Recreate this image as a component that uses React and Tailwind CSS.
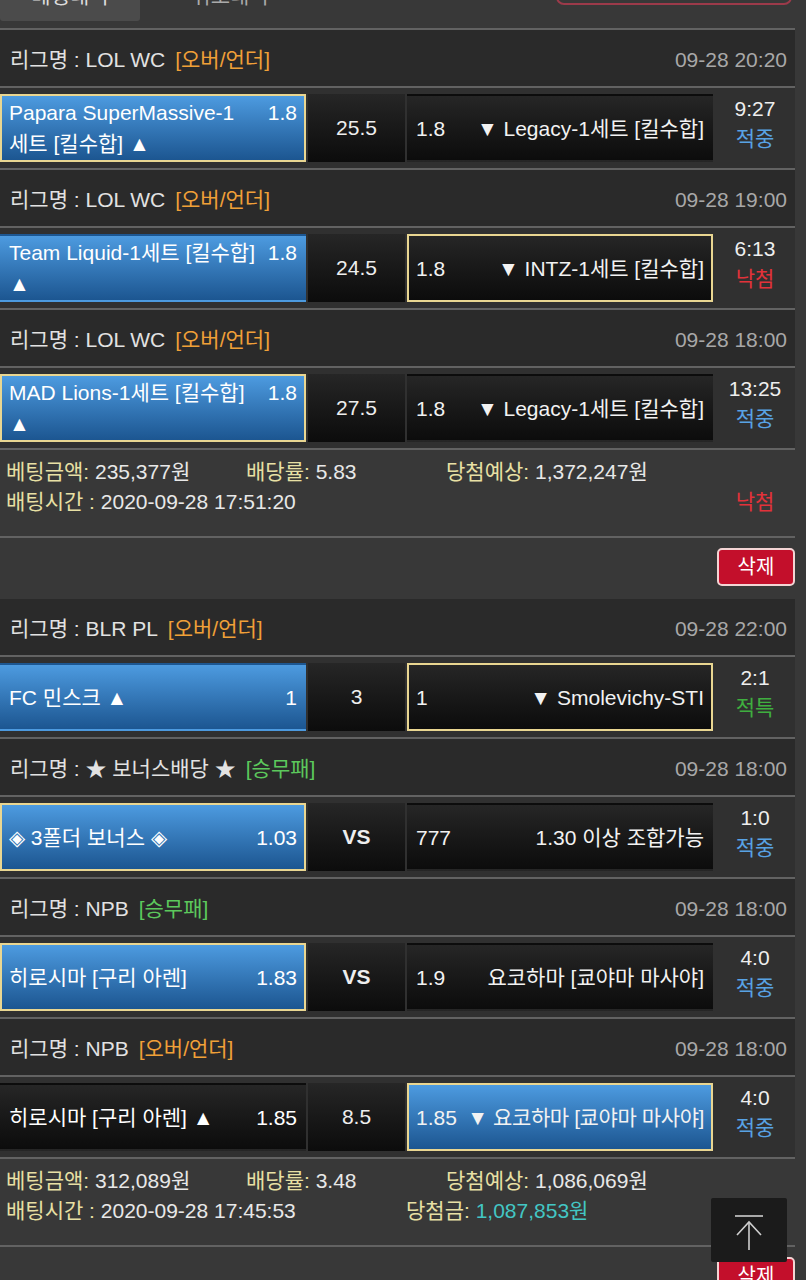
import React from 'react'

const RESULT_COLOR = {
  '적중': 'text-[#58a2e4]',
  '낙첨': 'text-[#e2323a]',
  '적특': 'text-[#3fae3f]',
}

const groups = [
  {
    matches: [
      {
        league: 'LOL WC', type: '[오버/언더]', typeColor: 'text-[#f0a038]', time: '09-28 20:20',
        home: { name: 'Papara SuperMassive-1 세트 [킬수합] ▲', odds: '1.8', blue: true, sel: true },
        mid: '25.5',
        away: { name: '▼ Legacy-1세트 [킬수합]', odds: '1.8' },
        score: '9:27', result: '적중',
      },
      {
        league: 'LOL WC', type: '[오버/언더]', typeColor: 'text-[#f0a038]', time: '09-28 19:00',
        home: { name: 'Team Liquid-1세트 [킬수합] ▲', odds: '1.8', blue: true },
        mid: '24.5',
        away: { name: '▼ INTZ-1세트 [킬수합]', odds: '1.8', sel: true },
        score: '6:13', result: '낙첨',
      },
      {
        league: 'LOL WC', type: '[오버/언더]', typeColor: 'text-[#f0a038]', time: '09-28 18:00',
        home: { name: 'MAD Lions-1세트 [킬수합] ▲', odds: '1.8', blue: true, sel: true },
        mid: '27.5',
        away: { name: '▼ Legacy-1세트 [킬수합]', odds: '1.8' },
        score: '13:25', result: '적중',
      },
    ],
    summary: {
      amount: '235,377원', rate: '5.83', expect: '1,372,247원', time: '2020-09-28 17:51:20',
      lost: true,
    },
  },
  {
    matches: [
      {
        league: 'BLR PL', type: '[오버/언더]', typeColor: 'text-[#f0a038]', time: '09-28 22:00',
        home: { name: 'FC 민스크 ▲', odds: '1', blue: true },
        mid: '3',
        away: { name: '▼ Smolevichy-STI', odds: '1', sel: true },
        score: '2:1', result: '적특',
      },
      {
        league: '★ 보너스배당 ★', type: '[승무패]', typeColor: 'text-[#5cc85c]', time: '09-28 18:00',
        home: { name: '◈ 3폴더 보너스 ◈', odds: '1.03', blue: true, sel: true },
        mid: 'VS',
        away: { name: '1.30 이상 조합가능', odds: '777' },
        score: '1:0', result: '적중',
      },
      {
        league: 'NPB', type: '[승무패]', typeColor: 'text-[#5cc85c]', time: '09-28 18:00',
        home: { name: '히로시마 [구리 아렌]', odds: '1.83', blue: true, sel: true },
        mid: 'VS',
        away: { name: '요코하마 [쿄야마 마사야]', odds: '1.9' },
        score: '4:0', result: '적중',
      },
      {
        league: 'NPB', type: '[오버/언더]', typeColor: 'text-[#f0a038]', time: '09-28 18:00',
        home: { name: '히로시마 [구리 아렌] ▲', odds: '1.85' },
        mid: '8.5',
        away: { name: '▼ 요코하마 [쿄야마 마사야]', odds: '1.85', blue: true, sel: true, tight: true },
        score: '4:0', result: '적중',
      },
    ],
    summary: {
      amount: '312,089원', rate: '3.48', expect: '1,086,069원', time: '2020-09-28 17:45:53',
      won: '1,087,853원',
    },
  },
]

const Line = () => <div className="h-[2px] bg-[#626262]" />

const Box = ({ blue, sel, children }) => (
  <div
    className={
      'w-[306px] h-[68px] shrink-0 flex items-center px-[7px] border-2 ' +
      (blue ? 'bg-linear-to-b from-[#4d9be0] to-[#1c5691] ' : 'bg-linear-to-b from-[#262626] to-[#0c0c0c] ') +
      (sel ? 'border-[#e9d691]' : 'border-transparent')
    }
  >
    {children}
  </div>
)

const Match = ({ m }) => (
  <div>
    <div className="h-[56px] bg-[#2a2a2a] flex items-center justify-between pl-[10px] pr-[8px] pt-[4px]">
      <div className="text-[#e2e2e2]">
        리그명 : {m.league}
        <span className={'ml-[10px] ' + m.typeColor}>{m.type}</span>
      </div>
      <div className="text-[#a8a8a8]">{m.time}</div>
    </div>
    <Line />
    <div className="h-[80px] bg-[#303030] flex items-center gap-[2px]">
      <Box blue={m.home.blue} sel={m.home.sel}>
        <div className="w-full flex items-start justify-between gap-[12px] leading-[31px] text-white">
          <span>{m.home.name}</span>
          <span className="shrink-0">{m.home.odds}</span>
        </div>
      </Box>
      <div className="w-[97px] h-[68px] shrink-0 bg-linear-to-b from-[#262626] to-[#0c0c0c] flex items-center justify-center text-[#eeeeee]">
        {m.mid === 'VS' ? <span className="font-bold">VS</span> : m.mid}
      </div>
      <Box blue={m.away.blue} sel={m.away.sel}>
        <div className="w-full flex items-start justify-between gap-[8px] leading-[31px] text-[#f2f2f2] whitespace-nowrap">
          <span className="shrink-0">{m.away.odds}</span>
          <span className={'text-right ' + (m.away.tight ? 'tracking-[-0.4px]' : '')}>{m.away.name}</span>
        </div>
      </Box>
      <div className="flex-1 flex flex-col items-center leading-[30px] -mt-[8px]">
        <span className="text-[#eeeeee]">{m.score}</span>
        <span className={RESULT_COLOR[m.result]}>{m.result}</span>
      </div>
    </div>
    <Line />
  </div>
)

const Summary = ({ s }) => (
  <div className="pt-[7px] pb-[19px] leading-[30px] text-[#e8e8e8]">
    <div className="flex">
      <span className="w-[246px] pl-[6px]"><span className="text-[#e8e0a4]">베팅금액:</span> {s.amount}</span>
      <span className="w-[200px]"><span className="text-[#e8e0a4]">배당률:</span> {s.rate}</span>
      <span><span className="text-[#e8e0a4]">당첨예상:</span> {s.expect}</span>
    </div>
    <div className="flex">
      <span className="w-[406px] pl-[6px]"><span className="text-[#e8e0a4]">배팅시간 :</span> {s.time}</span>
      {s.won && (
        <span><span className="text-[#e8e0a4]">당첨금:</span> <span className="text-[#43c6c4]">{s.won}</span></span>
      )}
      {s.lost && (
        <span className="ml-auto w-[80px] text-center text-[#e2323a]">낙첨</span>
      )}
    </div>
  </div>
)

const Group = ({ g }) => (
  <div>
    {g.matches.map((m, i) => <Match key={i} m={m} />)}
    <Summary s={g.summary} />
    <Line />
    <div className="flex justify-end pt-[10px] pb-[13px]">
      <button className="w-[78px] h-[38px] bg-[#c30f2b] border-2 border-[#f3d4d4] rounded-[5px] text-white text-[20px] leading-none">
        삭제
      </button>
    </div>
  </div>
)

const App = () => {
  return (
    <div className="min-h-screen bg-[#383838] font-['Liberation_Sans','Noto_Sans_CJK_KR',sans-serif] text-[21px]">
      <div className="w-[795px]">
        <div className="h-[28px] overflow-hidden">
          <div className="-mt-[18px] h-[40px] flex items-start">
            <div className="w-[140px] h-[39px] bg-[#4b4b4b] rounded-b-[3px] text-center leading-[28px] text-[#dddddd]">
              베팅내역
            </div>
            <div className="ml-[40px] w-[100px] text-center leading-[28px] text-[#aaaaaa]">취소내역</div>
            <div className="ml-auto mr-[3px] w-[236px] h-[23px] border-2 border-[#9c3a4a] rounded-[8px]" />
          </div>
        </div>
        <Line />
        {groups.map((g, i) => <Group key={i} g={g} />)}
      </div>

      <button className="fixed right-[19px] bottom-[18px] w-[76px] h-[64px] bg-[#1b1b1b] rounded-[2px] flex items-center justify-center">
        <svg width="76" height="64" viewBox="0 0 76 64" fill="none" stroke="#cfcfcf" strokeWidth="1.6">
          <line x1="24" y1="18" x2="52" y2="18" />
          <line x1="38" y1="24" x2="38" y2="52" />
          <polyline points="26,37 38,24 50,37" />
        </svg>
      </button>
    </div>
  )
}

export default App
